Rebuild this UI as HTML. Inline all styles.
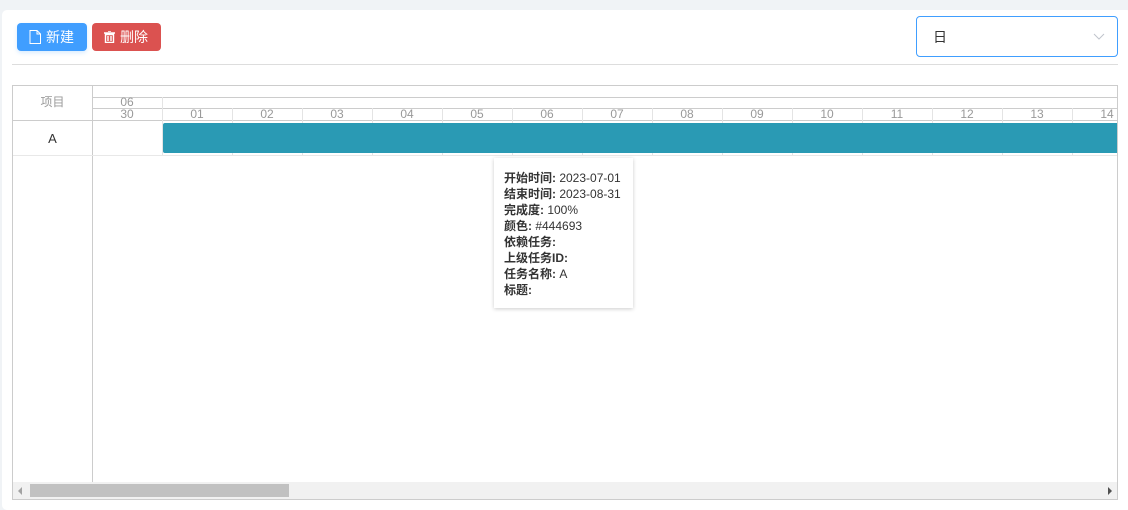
<!DOCTYPE html>
<html><head><meta charset="utf-8"><style>
*{box-sizing:border-box;margin:0;padding:0}
body{width:1128px;height:507px;background:#f0f3f6;font-family:"Liberation Sans","Noto Sans CJK SC",sans-serif;position:relative;overflow:hidden}
.card{position:absolute;left:2px;top:10px;width:1130px;height:500px;background:#fff;border-radius:5px}
.btn{position:absolute;top:23px;height:28px;border-radius:4px;color:#fff;font-size:14px;line-height:28px;padding-left:12px;box-shadow:0 2px 4px rgba(64,158,255,.2)}
.line{position:absolute;left:12px;top:64px;width:1106px;height:1px;background:#ddd}
.sel{position:absolute;left:916px;top:16px;width:202px;height:41px;border:1px solid #409eff;border-radius:4px;font-size:14px;color:#333;padding:10px 16px}
.g{position:absolute;left:12px;top:85px;width:1106px;height:415px;border:1px solid #ccc;overflow:hidden}
.abs{position:absolute}
.hd{font-size:12px;color:#999;text-align:center}
.tip{position:absolute;left:494px;top:158px;width:139px;height:150px;background:#fff;box-shadow:0 1px 4px rgba(0,0,0,.2);padding:12px 10px;font-size:12px;line-height:16px;color:#333}
.tip b{font-weight:bold}
</style></head><body>
<div class="card"></div>
<div class="btn" style="left:17px;width:70px;background:#409eff"><svg width="12" height="14" style="position:absolute;left:12px;top:7px" viewBox="0 0 12 14"><path d="M1 .5h7l3.5 3.5v9.5H1z M8 .5V4h3.5" fill="none" stroke="#fff"/></svg><span style="margin-left:17px">新建</span></div>
<div class="btn" style="left:92px;width:69px;background:#db5250;box-shadow:none"><svg width="11" height="12" style="position:absolute;left:12px;top:8px" viewBox="0 0 11 12"><path d="M0 2h11M4 0h3M1.5 3.5h8v8h-8z M4 5v5M7 5v5" fill="none" stroke="#fff" stroke-width="1.4"/></svg><span style="margin-left:16px">删除</span></div>
<div class="line"></div>
<div class="sel">日<svg width="12" height="8" style="position:absolute;right:12px;top:16px" viewBox="0 0 12 8"><path d="M1 1l5 5 5-5" fill="none" stroke="#c0c4cc"/></svg></div>
<div class="g">
 <div class="abs" style="left:79px;top:0;width:1px;height:415px;background:#ccc"></div>
 <div class="abs" style="left:80px;top:11px;width:1030px;height:1px;background:#ccc"></div>
 <div class="abs" style="left:80px;top:22px;width:1030px;height:1px;background:#ccc"></div>
 <div class="abs" style="left:0;top:34px;width:1110px;height:1px;background:#ccc"></div>
 <div class="abs" style="left:0;top:69px;width:1110px;height:1px;background:#e8e8e8"></div>
 <div class="abs hd" style="left:0;top:7px;width:79px;font-size:12px">项目</div>
 <div class="abs" style="left:0;top:45px;width:79px;text-align:center;font-size:13px;color:#333">A</div>
 <div class="abs hd" style="left:79px;top:10px;width:70px;line-height:13px">06</div>
 <div class="abs" style="left:149px;top:11px;width:1px;height:58px;background:#e4e4e4"></div>
 <div id="days"></div>
 <div class="abs" style="left:150px;top:37px;width:960px;height:30px;background:#2a9ab4;border-radius:2px"></div>
 <div class="abs" style="left:0;top:396px;width:1110px;height:17px;background:#f1f1f1"></div>
 <div class="abs" style="left:17px;top:398px;width:259px;height:13px;background:#c1c1c1"></div>
 <svg class="abs" style="left:5px;top:401px" width="6" height="8"><path d="M4 0v8L0 4z" fill="#a3a3a3"/></svg>
 <svg class="abs" style="left:1094px;top:401px" width="6" height="8"><path d="M1 0v8L5 4z" fill="#505050"/></svg>
</div>
<div class="tip"><b>开始时间:</b> 2023-07-01<br><b>结束时间:</b> 2023-08-31<br><b>完成度:</b> 100%<br><b>颜色:</b> #444693<br><b>依赖任务:</b><br><b>上级任务ID:</b><br><b>任务名称:</b> A<br><b>标题:</b></div>
<script>
var h='',d=['30','01','02','03','04','05','06','07','08','09','10','11','12','13','14'];
for(var i=0;i<d.length;i++){var x=79+i*70;h+='<div class="abs hd" style="left:'+x+'px;top:22px;width:70px;line-height:13px">'+d[i]+'</div>';if(i>0)h+='<div class="abs" style="left:'+(x+70)+'px;top:22px;width:1px;height:47px;background:#e4e4e4"></div>';}
document.getElementById('days').innerHTML=h;
</script>
</body></html>
